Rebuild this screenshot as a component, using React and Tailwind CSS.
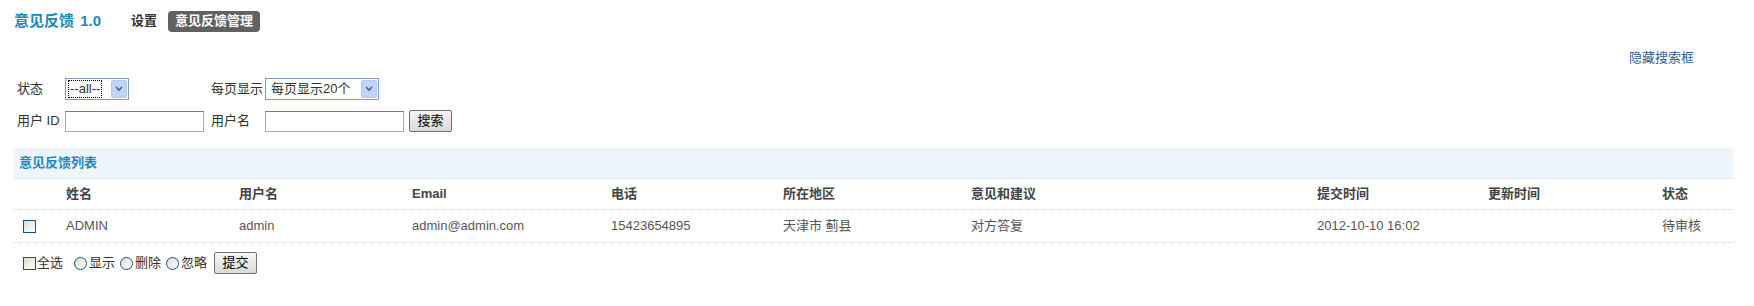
import { useState } from 'react'

const FONT = { fontFamily: '"Liberation Sans", "Noto Sans CJK SC", sans-serif' }

const cols = 'grid grid-cols-[53px_173px_173px_199px_172px_188px_346px_171px_174px_71px]'

const headers = ['', '姓名', '用户名', 'Email', '电话', '所在地区', '意见和建议', '提交时间', '更新时间', '状态']
const rows = [
  ['ADMIN', 'admin', 'admin@admin.com', '15423654895', '天津市 蓟县', '对方答复', '2012-10-10 16:02', '', '待审核'],
]

function FakeSelect({ value, width, focused }) {
  return (
    <div className={`flex items-center h-[22px] border border-[#7f9db9] bg-white ${width}`}>
      <div className="flex-1 pl-[3px] h-full flex items-center">
        <span className={focused ? 'outline-1 outline-dotted outline-black px-[1px] leading-[16px]' : 'px-[2px]'}>{value}</span>
      </div>
      <div className="w-[16px] h-[18px] mr-[1px] rounded-[2px] bg-[#c1d3fb] border border-[#b2c7f5] flex items-center justify-center">
        <svg width="8" height="6" viewBox="0 0 8 6">
          <path d="M1 1 L4 4 L7 1" stroke="#4d6185" strokeWidth="1.6" fill="none" />
        </svg>
      </div>
    </div>
  )
}

function Btn({ children }) {
  return (
    <button className="h-[22px] w-[43px] border border-[#707070] bg-gradient-to-b from-[#f6f6f6] to-[#dadada] text-[13px] text-black rounded-[2px]">
      {children}
    </button>
  )
}

function Radio({ label }) {
  return (
    <label className="flex items-center gap-[2px]">
      <span className="w-[13px] h-[13px] rounded-full border border-[#1c5180] bg-gradient-to-br from-[#dcdcd5] to-white" />
      <span>{label}</span>
    </label>
  )
}

export default function App() {
  const [checked, setChecked] = useState(false)

  return (
    <div className="min-h-[306px] bg-white text-[13px] text-[#333]" style={FONT}>
      {/* top bar */}
      <div className="flex items-center h-[42px] pl-[14px]">
        <span className="text-[#1b89bd] font-bold text-[15px]">意见反馈 <span className="ml-[2px]">1.0</span></span>
        <span className="ml-[30px] font-bold text-[#333]">设置</span>
        <span className="ml-[11px] px-[7px] h-[21px] flex items-center rounded-[4px] bg-[#616161] text-white font-bold">意见反馈管理</span>
      </div>

      <div className="flex justify-end pr-[60px] pt-[6px] h-[26px]">
        <a className="text-[#2e5f92]">隐藏搜索框</a>
      </div>

      {/* search */}
      <div className="pl-[17px] pt-[10px] flex flex-col gap-[10px]">
        <div className="flex items-center">
          <span className="w-[48px]">状态</span>
          <FakeSelect value="--all--" width="w-[64px]" focused />
          <span className="ml-[82px] w-[54px]">每页显示</span>
          <FakeSelect value="每页显示20个" width="w-[114px]" />
        </div>
        <div className="flex items-center">
          <span className="w-[48px]">用户 ID</span>
          <input className="w-[139px] h-[21px] border border-[#a5acb5] border-t-[#7a7a7a] outline-none" />
          <span className="ml-[7px] w-[54px]">用户名</span>
          <input className="w-[139px] h-[21px] border border-[#a5acb5] border-t-[#7a7a7a] outline-none" />
          <span className="ml-[5px]"><Btn>搜索</Btn></span>
        </div>
      </div>

      {/* list */}
      <div className="mx-[13px] mt-[16px] w-[1720px]">
        <div className="h-[31px] bg-[#eef5fc] border-b border-[#e3edf6] flex items-center pl-[6px] text-[#1b89bd] font-bold">
          意见反馈列表
        </div>
        <div className={`${cols} h-[31px] items-center border-b border-dotted border-[#cdd8e0] font-bold text-[#444]`}>
          {headers.map((h, i) => (
            <div key={i}>{h}</div>
          ))}
        </div>
        {rows.map((r, i) => (
          <div key={i} className={`${cols} h-[33px] items-center border-b border-dotted border-[#cdd8e0] text-[#555]`}>
            <div className="pl-[10px]">
              <span
                onClick={() => setChecked(!checked)}
                className="block w-[13px] h-[13px] border border-[#1c5180] bg-gradient-to-br from-[#dcdcd5] to-white"
              />
            </div>
            {r.map((c, j) => (
              <div key={j}>{c}</div>
            ))}
          </div>
        ))}
        <div className="flex items-center h-[40px] pl-[10px] gap-[5px]">
          <label className="flex items-center gap-[1px]">
            <span className="w-[13px] h-[13px] border border-[#1c5180] bg-gradient-to-br from-[#dcdcd5] to-white" />
            <span>全选</span>
          </label>
          <span className="ml-[6px]"><Radio label="显示" /></span>
          <Radio label="删除" />
          <Radio label="忽略" />
          <span className="ml-[2px]"><Btn>提交</Btn></span>
        </div>
      </div>
    </div>
  )
}
